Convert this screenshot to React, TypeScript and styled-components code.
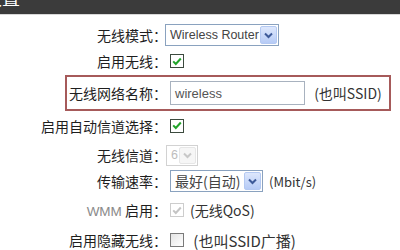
import React from "react";
import styled, { createGlobalStyle } from "styled-components";

const GlobalStyle = createGlobalStyle`
  html, body {
    margin: 0;
    padding: 0;
    background: #fff;
  }
  body {
    font-family: "Noto Sans CJK SC", "Liberation Sans", sans-serif;
  }
`;

const Page = styled.div`
  width: 400px;
  height: 250px;
  overflow: hidden;
  background: #fff;
`;

const TitleBar = styled.header`
  height: 14px;
  background: #3b3b3b;
  border-bottom: 1px solid #d8d8d8;
  overflow: hidden;
  color: #fff;
  font-size: 18px;
  line-height: 18px;
`;

const TitleText = styled.span`
  display: block;
  margin-top: -12px;
  margin-left: -16px;
  white-space: nowrap;
`;

const Form = styled.div`
  padding-top: 5px;
  display: flex;
  flex-direction: column;
`;

const Row = styled.div<{ $h: number; $label?: number }>`
  display: grid;
  grid-template-columns: ${({ $label }) => $label ?? 167}px 1fr;
  column-gap: 1px;
  align-items: center;
  height: ${({ $h }) => $h}px;
`;

const Highlight = styled.div`
  margin: 3px 9px 0 65px;
  height: 36px;
  box-sizing: border-box;
  border: 2px solid #a65a5a;
  display: flex;
  flex-direction: column;
`;

const Label = styled.div`
  text-align: right;
  font-size: 14px;
  color: #1e1e1e;
  white-space: nowrap;
`;

const Dim = styled.span`
  color: #8a8a8a;
  font-family: "Liberation Sans", sans-serif;
  font-size: 13.5px;
`;

const Control = styled.div`
  display: flex;
  align-items: center;
  gap: 6px;
`;

const Note = styled.span<{ $size?: number }>`
  font-size: ${({ $size }) => $size ?? 14}px;
  color: #333;
  white-space: nowrap;
`;

const SelectBox = styled.div<{ $w: number; $h: number; $off?: boolean; $shift?: number }>`
  width: ${({ $w }) => $w}px;
  height: ${({ $h }) => $h}px;
  margin-left: ${({ $shift }) => $shift ?? 0}px;
  box-sizing: border-box;
  border: 1px solid ${({ $off }) => ($off ? "#d2d2d2" : "#8aa2bf")};
  background: #fff;
  display: flex;
  align-items: center;
  justify-content: space-between;
  padding: 1px;
  color: ${({ $off }) => ($off ? "#bdbdbd" : "#444")};
  font-size: 13px;
`;

const SelectText = styled.span<{ $latin?: boolean }>`
  padding-left: 3px;
  white-space: nowrap;
  font-family: ${({ $latin }) =>
    $latin ? '"Liberation Sans", sans-serif' : '"Noto Sans CJK SC", sans-serif'};
  font-size: ${({ $latin }) => ($latin ? "12.5px" : "14px")};
`;

const ArrowButton = styled.span<{ $off?: boolean }>`
  width: 17px;
  height: 100%;
  box-sizing: border-box;
  border-radius: 2px;
  border: 1px solid ${({ $off }) => ($off ? "#e6e6e6" : "#b4c9f2")};
  background: ${({ $off }) =>
    $off ? "#f6f6f6" : "linear-gradient(#dde7fc, #b6cbf6)"};
  display: flex;
  align-items: center;
  justify-content: center;
`;

const TextInput = styled.div`
  width: 135px;
  height: 24px;
  margin-left: 2px;
  box-sizing: border-box;
  border: 1px solid #a8b2bf;
  background: #fff;
  display: flex;
  align-items: center;
  padding-left: 4px;
  font-family: "Liberation Sans", sans-serif;
  font-size: 13px;
  color: #555;
`;

type BoxState = "on" | "off" | "disabled";

const Box = styled.span<{ $state: BoxState }>`
  width: 14px;
  height: 14px;
  margin-left: 2px;
  box-sizing: border-box;
  border: 1px solid
    ${({ $state }) =>
      $state === "on" ? "#3c4a3e" : $state === "disabled" ? "#cdcdcd" : "#7a7a7a"};
  background: ${({ $state }) =>
    $state === "off" ? "linear-gradient(135deg, #e4e4e4, #fff)" : "#fff"};
  display: flex;
  align-items: center;
  justify-content: center;
`;

const Chevron = ({ off }: { off?: boolean }) => (
  <svg width="9" height="7" viewBox="0 0 9 7">
    <path
      d="M1 1.5 L4.5 5 L8 1.5"
      fill="none"
      stroke={off ? "#c8c8c8" : "#3d5a99"}
      strokeWidth="2"
    />
  </svg>
);

const Checkbox = ({ state }: { state: BoxState }) => (
  <Box $state={state}>
    {state !== "off" && (
      <svg width="10" height="9" viewBox="0 0 10 9">
        <path
          d="M1.2 4.4 L3.8 7 L8.8 1.5"
          fill="none"
          stroke={state === "on" ? "#22a52a" : "#c4c4c4"}
          strokeWidth="2"
        />
      </svg>
    )}
  </Box>
);

type SelectProps = {
  text: string;
  w: number;
  h: number;
  latin?: boolean;
  off?: boolean;
  shift?: number;
};

const Select = ({ text, w, h, latin, off, shift }: SelectProps) => (
  <SelectBox $w={w} $h={h} $off={off} $shift={shift}>
    <SelectText $latin={latin}>{text}</SelectText>
    <ArrowButton $off={off}>
      <Chevron off={off} />
    </ArrowButton>
  </SelectBox>
);

export default function App() {
  return (
    <Page>
      <GlobalStyle />
      <TitleBar>
        <TitleText>设置</TitleText>
      </TitleBar>
      <Form>
        <Row $h={30}>
          <Label>无线模式：</Label>
          <Control>
            <Select text="Wireless Router" w={114} h={22} latin shift={-3} />
          </Control>
        </Row>
        <Row $h={22}>
          <Label>启用无线：</Label>
          <Control>
            <Checkbox state="on" />
          </Control>
        </Row>
        <Highlight>
          <Row $h={32} $label={100}>
            <Label>无线网络名称：</Label>
            <Control>
              <TextInput>wireless</TextInput>
              <Note>&nbsp;(也叫SSID)</Note>
            </Control>
          </Row>
        </Highlight>
        <Row $h={29}>
          <Label>启用自动信道选择：</Label>
          <Control>
            <Checkbox state="on" />
          </Control>
        </Row>
        <Row $h={30}>
          <Label>无线信道：</Label>
          <Control>
            <Select text="6" w={32} h={21} latin off shift={-2} />
          </Control>
        </Row>
        <Row $h={22}>
          <Label>传输速率：</Label>
          <Control>
            <Select text="最好(自动)" w={93} h={22} shift={2} />
            <Note $size={13}>(Mbit/s)</Note>
          </Control>
        </Row>
        <Row $h={36}>
          <Label>
            <Dim>WMM</Dim> 启用：
          </Label>
          <Control>
            <Checkbox state="disabled" />
            <Note>(无线QoS)</Note>
          </Control>
        </Row>
        <Row $h={24}>
          <Label>启用隐藏无线：</Label>
          <Control>
            <Checkbox state="off" />
            <Note $size={15}>&nbsp;(也叫SSID广播)</Note>
          </Control>
        </Row>
      </Form>
    </Page>
  );
}
